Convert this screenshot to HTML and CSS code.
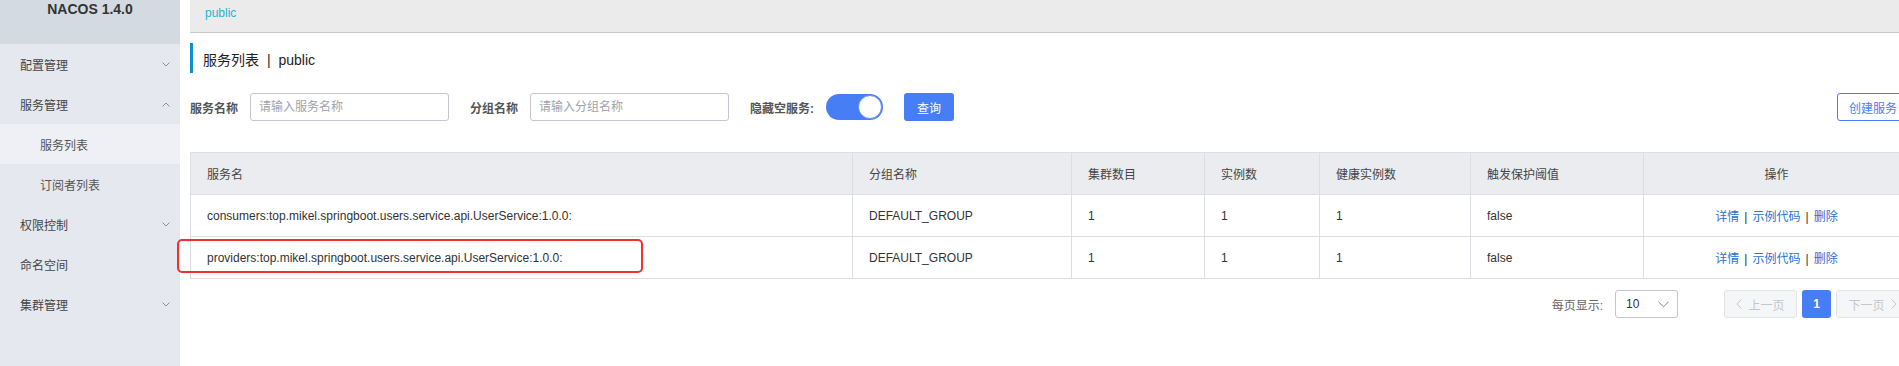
FILE: index.html
```html
<!DOCTYPE html>
<html lang="zh-CN">
<head>
  <meta charset="UTF-8">
  <title>Nacos</title>
  <link rel="stylesheet" href="styles.css">
</head>
<body>
<div class="page">
  <aside class="sidebar">
    <div class="brand">NACOS 1.4.0</div>
    <ul class="menu">
      <li class="item">配置管理 <svg class="arrow" viewBox="0 0 8 5"><path d="M0.5 0.5 L4 4 L7.5 0.5"/></svg></li>
      <li class="item">服务管理 <svg class="arrow" viewBox="0 0 8 5"><path d="M0.5 4.5 L4 1 L7.5 4.5"/></svg></li>
      <li class="sub active">服务列表</li>
      <li class="sub">订阅者列表</li>
      <li class="item">权限控制 <svg class="arrow" viewBox="0 0 8 5"><path d="M0.5 0.5 L4 4 L7.5 0.5"/></svg></li>
      <li class="item">命名空间</li>
      <li class="item">集群管理 <svg class="arrow" viewBox="0 0 8 5"><path d="M0.5 0.5 L4 4 L7.5 0.5"/></svg></li>
    </ul>
  </aside>

  <main class="main">
    <div class="crumbs"><span class="ns">public</span></div>

    <h2 class="title">服务列表 <span class="sep">|</span> public</h2>

    <div class="search">
      <label class="lbl">服务名称</label>
      <input class="inp" type="text" placeholder="请输入服务名称">
      <label class="lbl">分组名称</label>
      <input class="inp" type="text" placeholder="请输入分组名称">
      <label class="lbl">隐藏空服务:</label>
      <span class="switch"><span class="knob"></span></span>
      <button class="btn primary">查询</button>
      <button class="btn create">创建服务</button>
    </div>

    <div class="table-wrap">
      <table class="grid">
        <colgroup>
          <col style="width:662px">
          <col style="width:219px">
          <col style="width:133px">
          <col style="width:115px">
          <col style="width:151px">
          <col style="width:173px">
          <col style="width:266px">
        </colgroup>
        <thead>
          <tr>
            <th>服务名</th>
            <th>分组名称</th>
            <th>集群数目</th>
            <th>实例数</th>
            <th>健康实例数</th>
            <th>触发保护阈值</th>
            <th class="center">操作</th>
          </tr>
        </thead>
        <tbody>
          <tr>
            <td>consumers:top.mikel.springboot.users.service.api.UserService:1.0.0:</td>
            <td>DEFAULT_GROUP</td>
            <td>1</td>
            <td>1</td>
            <td>1</td>
            <td>false</td>
            <td class="center"><a class="link">详情</a><span class="bar">|</span><a class="link">示例代码</a><span class="bar">|</span><a class="link">删除</a></td>
          </tr>
          <tr>
            <td>providers:top.mikel.springboot.users.service.api.UserService:1.0.0:</td>
            <td>DEFAULT_GROUP</td>
            <td>1</td>
            <td>1</td>
            <td>1</td>
            <td>false</td>
            <td class="center"><a class="link">详情</a><span class="bar">|</span><a class="link">示例代码</a><span class="bar">|</span><a class="link">删除</a></td>
          </tr>
        </tbody>
      </table>
      <div class="mark"></div>
    </div>

    <div class="pager">
      <span class="size-lbl">每页显示:</span>
      <span class="select">10 <svg class="sel-arrow" viewBox="0 0 12 7"><path d="M0.5 0.5 L6 6 L11.5 0.5"/></svg></span>
      <span class="pg disabled"><svg class="pg-arrow" viewBox="0 0 6 10"><path d="M5.5 0.5 L0.8 5 L5.5 9.5"/></svg>上一页</span>
      <span class="pg current">1</span>
      <span class="pg disabled">下一页<svg class="pg-arrow" viewBox="0 0 6 10"><path d="M0.5 0.5 L5.2 5 L0.5 9.5"/></svg></span>
    </div>
  </main>
</div>
</body>
</html>
```

FILE: styles.css
```css
* {
  padding: 0;
  margin: 0;
  box-sizing: border-box;
}

body {
  font-family: "Liberation Sans", "Noto Sans CJK SC", sans-serif;
  font-size: 12px;
  color: #333;
  background: #fff;
  overflow: hidden;
  height: 366px;
}

.page {
  display: flex;
  height: 366px;
}

/* sidebar */
.sidebar {
  width: 180px;
  flex: none;
  background: #e5e8ee;
}

.brand {
  height: 44px;
  background: #d4dae2;
  text-align: center;
  font-size: 14px;
  font-weight: bold;
  line-height: 18px;
  color: #333;
}

.menu {
  list-style: none;
}

.menu li {
  height: 40px;
  display: flex;
  align-items: center;
  justify-content: space-between;
  padding: 0 10px 0 20px;
  font-size: 12px;
  color: #444;
}

.menu .sub {
  padding-left: 40px;
  color: #555;
}

.menu .active {
  background: #eef0f5;
}

.arrow {
  width: 8px;
  height: 5px;
  fill: none;
  stroke: #8a8f99;
  stroke-width: 1;
}

/* main */
.main {
  margin-left: 10px;
  width: 1719px;
  flex: none;
}

.crumbs {
  height: 33px;
  width: 1800px;
  background: #ebebeb;
  border-bottom: 1px solid #c9c9c9;
  padding-left: 15px;
  line-height: 26px;
}

.ns {
  color: #1fb4d6;
  font-size: 12px;
}

.title {
  margin-top: 10px;
  height: 30px;
  border-left: 3px solid #0e8fca;
  padding-left: 10px;
  font-size: 14px;
  font-weight: normal;
  line-height: 34px;
  color: #222;
}

.title .sep {
  margin: 0 4px;
}

.search {
  display: flex;
  align-items: center;
  margin-top: 20px;
  height: 28px;
}

.lbl {
  font-weight: bold;
  color: #555;
  font-size: 12px;
}

.inp {
  width: 199px;
  height: 28px;
  margin: 0 21px 0 12px;
  border: 1px solid #c4c6cf;
  border-radius: 3px;
  padding: 0 8px;
  font-family: inherit;
  font-size: 12px;
  outline: none;
}

.inp::placeholder {
  color: #a0a3ab;
}

.switch {
  display: inline-block;
  position: relative;
  width: 57px;
  height: 26px;
  margin-left: 12px;
  border-radius: 13px;
  background: #477ef5;
}

.switch .knob {
  position: absolute;
  right: 1px;
  top: 1px;
  width: 24px;
  height: 24px;
  border-radius: 50%;
  border: 1px solid #5f8ff7;
  background: #fff;
}

.btn {
  height: 28px;
  padding: 0 12px;
  border-radius: 3px;
  font-family: inherit;
  font-size: 12px;
  white-space: nowrap;
}

.primary {
  margin-left: 21px;
  width: 50px;
  border: none;
  background: #477ef5;
  color: #fff;
}

.create {
  margin-left: auto;
  width: 72px;
  padding: 0 11px;
  border: 1px solid #477ef5;
  background: #fff;
  color: #477ef5;
}

/* table */
.table-wrap {
  position: relative;
  margin-top: 31px;
}

.grid {
  table-layout: fixed;
  width: 1719px;
  border-collapse: collapse;
  border-left: 1px solid #dcdee3;
}

.grid th,
.grid td {
  height: 42px;
  padding: 0 16px;
  text-align: left;
  font-weight: normal;
  border: 1px solid #dcdee3;
  border-left: none;
  white-space: nowrap;
}

.grid th {
  background: #ebecf0;
  color: #444;
}

.grid td {
  color: #333;
}

.grid .center {
  text-align: center;
}

.link {
  color: #2a72d4;
}

.bar {
  margin: 0 5px;
  color: #333;
}

.mark {
  position: absolute;
  left: -13px;
  top: 87px;
  width: 466px;
  height: 34px;
  border: 2px solid #f23030;
  border-radius: 5px;
}

/* pager */
.pager {
  display: flex;
  justify-content: flex-end;
  align-items: center;
  margin-top: 11px;
  height: 28px;
}

.size-lbl {
  color: #666;
  margin-right: 12px;
}

.select {
  display: flex;
  align-items: center;
  justify-content: space-between;
  width: 63px;
  height: 28px;
  padding: 0 8px 0 10px;
  border: 1px solid #c4c6cf;
  border-radius: 3px;
  font-size: 12px;
  color: #333;
  margin-right: 41px;
}

.sel-arrow {
  width: 11px;
  height: 7px;
  fill: none;
  stroke: #777;
  stroke-width: 1;
}

.pg {
  display: flex;
  align-items: center;
  justify-content: center;
  gap: 6px;
  height: 28px;
  border-radius: 3px;
  margin-left: 5px;
}

.disabled {
  width: 73px;
  background: #f5f6f8;
  border: 1px solid #e3e4e8;
  color: #c4c6cc;
}

.current {
  width: 29px;
  background: #477ef5;
  color: #fff;
  font-weight: bold;
}

.pg-arrow {
  width: 6px;
  height: 10px;
  fill: none;
  stroke: #c4c6cc;
  stroke-width: 1;
}
```
